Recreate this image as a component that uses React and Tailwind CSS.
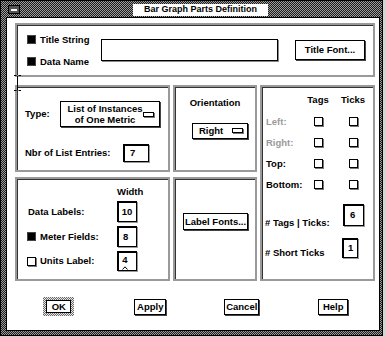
import React from 'react'

const dither = 'bg-[image:repeating-conic-gradient(#1c1c1c_0%_25%,#9c9c9c_0%_50%)] bg-[length:2px_2px]'
const lightDither = 'bg-[image:repeating-conic-gradient(#6a6a6a_0%_25%,#e8e8e8_0%_50%)] bg-[length:2px_2px]'

function Check({ on }) {
  if (on) return <span className="inline-block w-[9px] h-[9px] bg-black border border-[#444] shrink-0" />
  return <span className="inline-block w-[9px] h-[9px] bg-white border border-black shadow-[1px_1px_0_#777] shrink-0" />
}

function Field({ value, className = '' }) {
  return (
    <div className={`bg-white border border-black shadow-[inset_1px_1px_0_#000,1px_1px_0_#999] flex ${className}`}>
      {value}
    </div>
  )
}

function Btn({ children, className = '' }) {
  return (
    <div className={`bg-white border border-black shadow-[1px_1px_0_#444] flex items-center justify-center ${className}`}>
      {children}
    </div>
  )
}

function Panel({ children, className = '' }) {
  return (
    <div className={`border-2 border-[#9a9a9a] shadow-[inset_1px_1px_0_#333] bg-white ${className}`}>
      {children}
    </div>
  )
}

function Indicator() {
  return <span className="inline-block w-[11px] h-[5px] border border-black bg-white shadow-[1px_1px_0_#777] shrink-0" />
}

export default function App() {
  return (
    <div className="relative w-[386px] h-[337px] bg-[#d4d4d4] font-['Liberation_Sans',Arial,sans-serif] font-bold text-[9.5px] leading-none text-black">
      <div className={`w-[383px] h-[336px] border border-black flex flex-col pl-[5px] pr-[2px] pt-[1px] pb-[4px] ${dither}`}>
        {/* title bar */}
        <div className="h-[15px] flex items-center shrink-0">
          <div className="ml-[2px] w-[12px] h-[9px] border border-black bg-[#555] flex items-center justify-center">
            <span className="w-[6px] h-[2px] bg-white" />
          </div>
          <div className="ml-[113px] w-[135px] h-[12px] bg-white flex items-center justify-center text-[9px]">
            Bar Graph Parts Definition
          </div>
        </div>

        {/* content */}
        <div className="flex-1 bg-white border border-black flex flex-col pl-[8px] pr-[4px] pt-[5px]">
          <Panel className="h-[54px] flex items-center pl-[10px]">
            <div className="w-[74px] flex flex-col gap-[12px] pt-[1px]">
              <div className="flex items-center gap-[4px]"><Check on /> <span>Title String</span></div>
              <div className="flex items-center gap-[4px]"><Check on /> <span>Data Name</span></div>
            </div>
            <div className="w-[177px] h-[22px] bg-white border border-black shadow-[1px_1px_0_#888]" />
            <Btn className="ml-[17px] w-[70px] h-[20px]">Title Font...</Btn>
          </Panel>

          <div className="mt-[8px] grid grid-cols-[155px_84px_115px] grid-rows-[87px_104px] gap-x-[3px] gap-y-[5px]">
            {/* type */}
            <Panel className="pl-[8px] pt-[14px]">
              <div className="flex items-center">
                <span className="w-[35px]">Type:</span>
                <div className="w-[100px] h-[26px] border border-black shadow-[1px_1px_0_#444] flex items-center pl-[6px] pr-[5px]">
                  <div className="flex-1 text-center leading-[11px]">List of Instances<br />of One Metric</div>
                  <Indicator />
                </div>
              </div>
              <div className="flex items-center mt-[17px]">
                <span className="w-[98px]">Nbr of List Entries:</span>
                <Field value="7" className="w-[26px] h-[18px] pl-[6px] items-center" />
              </div>
            </Panel>

            {/* orientation */}
            <Panel className="pt-[11px]">
              <div className="text-center">Orientation</div>
              <div className="ml-[17px] mt-[15px] w-[56px] h-[16px] border border-black shadow-[1px_1px_0_#444] flex items-center pl-[6px] pr-[4px]">
                <span className="flex-1">Right</span>
                <Indicator />
              </div>
            </Panel>

            {/* tags / ticks */}
            <Panel className="row-span-2 pl-[3px] pt-[1px]">
              <div className="grid grid-cols-[35px_34px_36px] pl-[1px]">
                <div className="h-[23px]" />
                <div className="h-[23px] flex items-center justify-center">Tags</div>
                <div className="h-[23px] flex items-center justify-center">Ticks</div>
                {[['Left:', true], ['Right:', true], ['Top:', false], ['Bottom:', false]].map(([label, dim]) => (
                  <React.Fragment key={label}>
                    <div className={`h-[21px] flex items-center ${dim ? 'text-[#9a9a9a]' : ''}`}>{label}</div>
                    <div className="h-[21px] flex items-center justify-center"><Check /></div>
                    <div className="h-[21px] flex items-center justify-center"><Check /></div>
                  </React.Fragment>
                ))}
              </div>
              <div className="flex items-start mt-[9px]">
                <span className="w-[78px] mt-[14px]"># Tags | Ticks:</span>
                <Field value="6" className="w-[21px] h-[22px] pl-[6px] items-center" />
              </div>
              <div className="flex items-start mt-[10px]">
                <span className="w-[77px] mt-[10px]"># Short Ticks</span>
                <Field value="1" className="w-[16px] h-[20px] pl-[5px] items-start pt-[4px]" />
              </div>
            </Panel>

            {/* width */}
            <Panel className="pl-[10px] pt-[8px]">
              <div className="grid grid-cols-[90px_20px] gap-y-[4px] items-center">
                <div />
                <div className="text-center h-[11px] -mb-[1px]">Width</div>
                <div className="pl-[1px]">Data Labels:</div>
                <Field value="10" className="h-[21px] items-center justify-center" />
                <div className="flex items-center gap-[4px]"><Check on /><span>Meter Fields:</span></div>
                <Field value="8" className="h-[21px] pl-[5px] items-center" />
                <div className="flex items-center gap-[4px]"><Check /><span>Units Label:</span></div>
                <Field
                  value={
                    <div className="flex flex-col items-center">
                      <span className="leading-[10px]">4</span>
                      <svg width="6" height="4" viewBox="0 0 6 4" className="mt-[1px]">
                        <path d="M0.5 3.5L3 0.8L5.5 3.5" stroke="#000" strokeWidth="1" fill="none" />
                      </svg>
                    </div>
                  }
                  className="h-[20px] items-start pl-[4px] pt-[3px]"
                />
              </div>
            </Panel>

            {/* label fonts */}
            <Panel className="pt-[34px] pl-[8px]">
              <Btn className="w-[65px] h-[17px]">Label Fonts...</Btn>
            </Panel>
          </div>

          {/* buttons */}
          <div className="mt-[16px] -ml-[2px] -mr-[4px] grid grid-cols-4 items-center justify-items-center">
            <div className={`p-[3px] ${lightDither}`}>
              <Btn className="w-[25px] h-[13px] shadow-none">OK</Btn>
            </div>
            <Btn className="w-[32px] h-[16px]">Apply</Btn>
            <Btn className="w-[35px] h-[16px]">Cancel</Btn>
            <Btn className="w-[30px] h-[16px]">Help</Btn>
          </div>
        </div>
      </div>

      {/* I-beam pointer */}
      <svg className="absolute left-[14px] top-[75px]" width="7" height="16" viewBox="0 0 7 16">
        <path d="M0 0.5h2.5M4.5 0.5H7M3.5 1v14M0 15.5h2.5M4.5 15.5H7" stroke="#000" strokeWidth="1" fill="none" />
      </svg>
    </div>
  )
}
